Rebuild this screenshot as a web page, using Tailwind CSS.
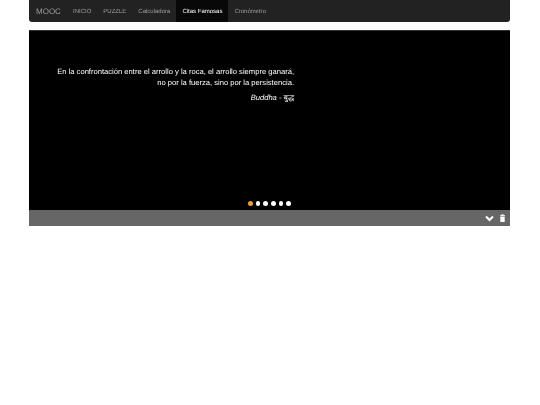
<!DOCTYPE html>
<html lang="es">
<head>
<meta charset="UTF-8">
<title>MOOC</title>
<script src="https://cdn.jsdelivr.net/npm/@tailwindcss/browser@4"></script>
</head>
<body class="bg-white font-['Liberation_Sans',Arial,sans-serif] [text-rendering:geometricPrecision]">
  <div class="mx-[29px] w-[481px] [will-change:transform]">
    <!-- Navbar -->
    <nav class="flex h-[22px] items-stretch rounded-b-[3px] bg-[#222222]">
      <a class="flex w-[38px] items-center pl-[7px] pt-px text-[8px] text-[#9d9d9d]">MOOC</a>
      <a class="flex items-center px-[6px] pt-[2px] text-[6px] text-[#9d9d9d]">INICIO</a>
      <a class="flex items-center px-[6px] pt-[2px] text-[6px] text-[#9d9d9d]">PUZZLE</a>
      <a class="flex items-center px-[6px] pt-[2px] text-[6px] text-[#9d9d9d]">Calculadora</a>
      <a class="flex items-center bg-[#080808] px-[6px] pt-[2px] text-[6px] text-white">Citas Famosas</a>
      <a class="flex items-center px-[6px] pt-[2px] text-[6px] text-[#9d9d9d]">Cronómetro</a>
    </nav>

    <!-- Quote carousel -->
    <section class="mt-2 flex h-[180px] flex-col border-t border-[#333] bg-black">
      <blockquote class="mt-[35px] w-[265px] text-right text-[7.6px] leading-[11px] text-white">
        <p>En la confrontación entre el arrollo y la roca, el arrollo siempre ganará,</p>
        <p>no por la fuerza, sino por la persistencia.</p>
        <p class="mt-[4px] italic">Buddha - <span class="font-['Noto_Sans','DejaVu_Sans',sans-serif]">बुद्ध</span></p>
      </blockquote>
      <div class="mt-auto mb-[4px] flex justify-center gap-[3px]">
        <span class="size-[4.6px] rounded-full bg-[#f0a030]"></span>
        <span class="size-[4.6px] rounded-full bg-white"></span>
        <span class="size-[4.6px] rounded-full bg-white"></span>
        <span class="size-[4.6px] rounded-full bg-white"></span>
        <span class="size-[4.6px] rounded-full bg-white"></span>
        <span class="size-[4.6px] rounded-full bg-white"></span>
      </div>
    </section>

    <!-- Toolbar -->
    <div class="flex h-[16px] items-center justify-end gap-[6.5px] bg-[#666666] pr-[5px]">
      <svg width="9" height="7" viewBox="0 0 9 7"><path d="M1 1.5 L4.5 5 L8 1.5" fill="none" stroke="#fff" stroke-width="2"/></svg>
      <svg width="5" height="8" viewBox="0 0 5 8"><path d="M0 1.2h1.5V.3h2v.9H5v1H0zM.3 2.8h4.4V8H.3z" fill="#fff"/></svg>
    </div>
  </div>
</body>
</html>
